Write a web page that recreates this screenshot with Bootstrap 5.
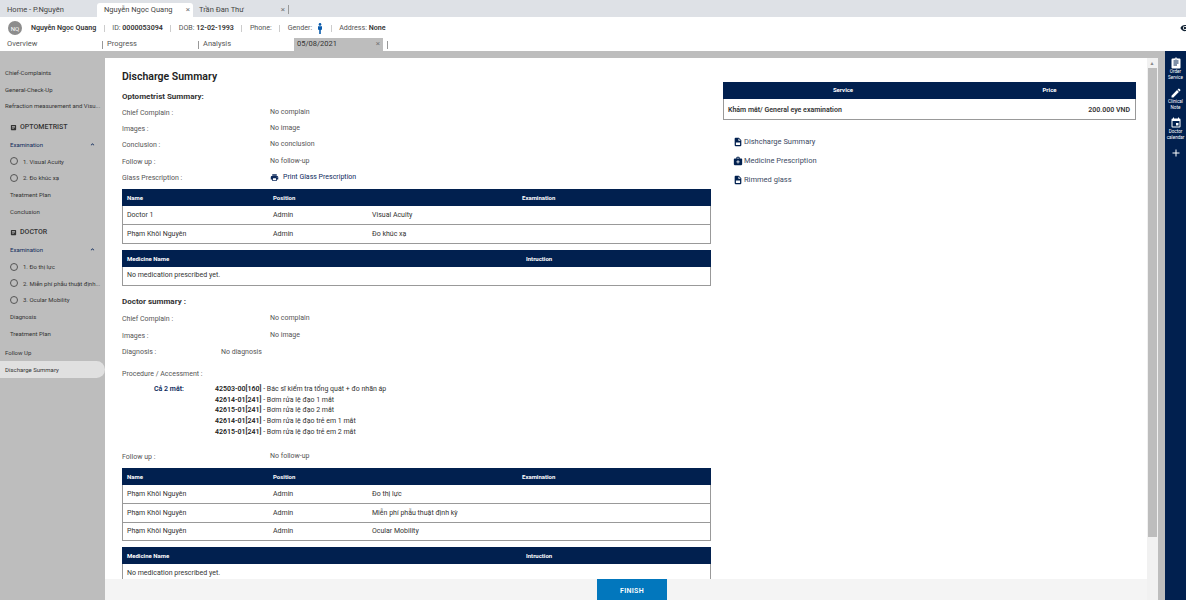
<!DOCTYPE html>
<html lang="en">
<head>
    <meta charset="UTF-8">
    <meta name="viewport" content="width=device-width, initial-scale=1.0">
    <title>Discharge Summary</title>
    <link href="https://cdn.jsdelivr.net/npm/bootstrap@5.3.3/dist/css/bootstrap.min.css" rel="stylesheet">
    <script src="https://cdn.jsdelivr.net/npm/bootstrap@5.3.3/dist/js/bootstrap.bundle.min.js"></script>
    <style>
        html, body { height: 100%; overflow: hidden; }
        body { font-family: Roboto, "Liberation Sans", sans-serif; font-size: 7px; color: #333; background: #fff; }
        svg { fill: currentColor; flex: none; display: block; }

        .tab-strip { height: 17px; background: #dee1e6; font-size: 7.5px; padding-left: 7px; color: #444; }
        .tab-strip .tab-item { width: 96px; height: 14px; margin-top: 3px; padding: 0 3px 0 0; }
        .tab-strip .tab-first { width: 90px; }
        .tab-strip .tab-on { background: #fff; border-radius: 3px 3px 0 0; padding-left: 7px; }
        .tab-x { color: #777; font-size: 8px; }
        .tab-strip .tab-third { width: 96px; border-right: 1px solid #999; padding-left: 6px; height: 9px; margin-top: 5px; }

        .patient-bar { height: 21px; padding: 1px 0 0 8px; font-size: 7.1px; color: #555; }
        .avatar { width: 14px; height: 14px; border-radius: 50%; background: #8d8d8d; color: #fff; font-size: 6px; margin-right: 9px; }
        .sep { width: 1px; height: 7px; background: #ccc; margin: 0 7.5px; }
        .patient-name { font-weight: 600; color: #333; }
        .patient-bar b { font-weight: 600; color: #333; }
        .gender-icon { color: #0b5cad; margin-left: 5px; }
        .eye-icon { margin-left: auto; margin-right: -5px; color: #123; }

        .sub-tabs { height: 13px; padding-left: 7px; font-size: 7.5px; color: #555; }
        .sub-item { width: 96px; height: 13px; }
        .sub-item span { margin-top: -2px; }
        .sub-item.bordered { border-right: 1px solid #999; height: 8px; }
        .sub-on { background: #bdbdbd; width: 90px; padding: 0 3px; margin-left: -1px; border-right: 1px solid #fff; color: #333; }
        .sub-end { width: 1px; height: 8px; background: #999; margin-left: 3px; }

        .work { height: 549px; background: #bdbdbd; }

        .side-nav { width: 105px; padding-top: 13px; font-size: 6px; color: #333; }
        .side-row { height: 16.7px; padding-left: 5px; white-space: nowrap; }
        .side-sub { padding-left: 10px; }
        .side-head { font-size: 7px; height: 22px; padding: 3px 0 0 10px; gap: 3px; color: #333; font-weight: 500; }
        .side-head-first { padding-top: 5px; }
        .side-link { color: #0d2a5c; justify-content: space-between; padding-right: 9px; }
        .side-circle { width: 8px; height: 8px; border: 1px solid #555; border-radius: 50%; margin-right: 5px; }
        .side-follow { margin-top: 3px; }
        .side-on { background: #e0e0e0; border-radius: 0 9px 9px 0; }

        .main-panel { margin-top: 7px; width: 1042px; background: #f4f4f4; min-width: 0; }
        .page-body { height: 521px; overflow: hidden; background: #fff; }
        .col-left { width: 589px; margin-left: 17px; padding-top: 12px; }
        .col-right { width: 413px; margin-left: 12px; padding-top: 24px; }

        .page-title { font-size: 10.5px; font-weight: 600; color: #222; margin: 0; height: 13px; line-height: 13px; }
        .sec-title { font-size: 8px; font-weight: 700; color: #333; margin: 8px 0 2px; height: 12px; line-height: 12px; }
        .sec-doctor { margin: 10px 0 4px; }
        .kv { height: 16.3px; color: #555; font-size: 7px; }
        .kv-key { width: 148px; }
        .kv-key-short { width: 99px; }
        .kv-val { margin-top: -2px; }
        .kv-proc { margin-top: 6px; }
        .link-navy { color: #0d2a5c; }

        .data-tbl { width: 100%; table-layout: fixed; border-collapse: separate; border-spacing: 0; margin: 0; font-size: 7px; }
        .data-tbl th { background: #01204f; color: #fff; height: 17px; padding: 0 5px; font-size: 6px; font-weight: 700; }
        .data-tbl td { height: 18.7px; padding: 0 5px; border-bottom: 1px solid #999; color: #333; vertical-align: middle; }
        .data-tbl td:first-child { border-left: 1px solid #999; padding-left: 4px; }
        .data-tbl td:last-child { border-right: 1px solid #999; }
        .tbl-gap { margin-top: 3px; }
        .tbl-next { margin-top: 6px; }
        .tbl-last { margin-top: 6px; }
        .data-tbl.tbl-service th { padding-bottom: 2px; }
        .data-tbl.tbl-service td { height: 21px; padding-top: 2px; font-weight: 600; }

        .proc-wrap { padding-left: 32px; margin-top: 1.5px; height: 64.9px; line-height: 10.6px; font-size: 7px; }
        .proc-label { width: 61px; font-weight: 600; color: #0d2a5c; }
        .proc-lines b { font-weight: 600; color: #222; }

        .doc-links { padding: 16px 0 0 10px; font-size: 7.5px; color: #3c4a63; gap: 8px; }
        .doc-links > div { height: 11px; gap: 1px; }
        .doc-links svg { color: #01204f; }

        .finish-bar { height: 21px; background: #f4f4f4; padding-left: 492px; }
        .finish-btn { width: 70px; height: 21px; background: #0277bd; color: #fff; border: 0; border-radius: 0; padding: 3px 0 0; font-size: 7px; font-weight: 600; letter-spacing: .3px; }

        .scroll-track { width: 11px; background: #f1f1f1; margin-top: 7px; padding-right: 1px; }
        .scroll-btn { height: 10px; color: #888; font-size: 5px; line-height: 10px; text-align: center; }
        .scroll-thumb { height: 469px; margin-left: 1px; background: #bdbdbd; }

        .right-rail { width: 21px; margin-left: 7px; background: #01204f; color: #fff; font-size: 4.6px; line-height: 6.3px; text-align: center; padding-top: 6px; }
        .rail-item { height: 30px; }
    </style>
</head>
<body>

<div class="tab-strip d-flex align-items-start">
    <div class="tab-item tab-first d-flex align-items-center">Home - P.Nguyên</div>
    <div class="tab-item tab-on d-flex align-items-center justify-content-between">Nguyễn Ngọc Quang <span class="tab-x">×</span></div>
    <div class="tab-item tab-third d-flex align-items-center justify-content-between">Trần Đan Thư <span class="tab-x">×</span></div>
</div>

<div class="patient-bar d-flex align-items-center">
    <div class="avatar d-flex align-items-center justify-content-center">NQ</div>
    <span class="patient-name">Nguyễn Ngọc Quang</span>
    <span class="sep"></span>
    <span>ID: <b>0000053094</b></span>
    <span class="sep"></span>
    <span>DOB: <b>12-02-1993</b></span>
    <span class="sep"></span>
    <span>Phone:</span>
    <span class="sep"></span>
    <span>Gender:</span>
    <svg class="gender-icon" width="6" height="11" viewBox="0 0 6 11"><circle cx="3" cy="1.4" r="1.3"/><path d="M1 3.2h4v3.6H4V11H3.2V7H2.8v4H2V6.8H1z"/></svg>
    <span class="sep"></span>
    <span>Address: <b>None</b></span>
    <svg class="eye-icon" width="12" height="10" viewBox="0 0 24 24"><path d="M12 4.5C7 4.500 2.700 7.600 1 12c1.700 4.400 6 7.500 11 7.500s9.300-3.100 11-7.500c-1.700-4.400-6-7.500-11-7.500zM12 17a5 5 0 1 1 0-10 5 5 0 0 1 0 10zm0-8a3 3 0 1 0 0 6 3 3 0 0 0 0-6z"/></svg>
</div>

<div class="sub-tabs d-flex align-items-center">
    <div class="sub-item bordered d-flex align-items-center"><span>Overview</span></div>
    <div class="sub-item bordered d-flex align-items-center ps-1"><span>Progress</span></div>
    <div class="sub-item d-flex align-items-center ps-1"><span>Analysis</span></div>
    <div class="sub-item sub-on d-flex align-items-center justify-content-between"><span>05/08/2021</span><span class="tab-x">×</span></div>
    <div class="sub-end"></div>
</div>

<div class="work d-flex">
    <nav class="side-nav flex-shrink-0">
        <div class="side-row d-flex align-items-center">Chief-Complaints</div>
        <div class="side-row d-flex align-items-center">General-Check-Up</div>
        <div class="side-row d-flex align-items-center">Refraction measurement and Visu...</div>
        <div class="side-head side-head-first d-flex align-items-center">
            <svg width="7" height="7" viewBox="0 0 24 24"><path d="M19 3H5a2 2 0 0 0-2 2v14a2 2 0 0 0 2 2h14a2 2 0 0 0 2-2V5a2 2 0 0 0-2-2zM7 7h10v2H7zm0 4h10v2H7zm0 4h7v2H7z"/></svg>
            OPTOMETRIST
        </div>
        <div class="side-row side-sub side-link d-flex align-items-center">Examination <svg width="7" height="7" viewBox="0 0 24 24"><path d="M12 8l-6 6 1.400 1.400L12 10.800l4.600 4.600L18 14z"/></svg></div>
        <div class="side-row side-sub d-flex align-items-center"><span class="side-circle"></span>1. Visual Acuity</div>
        <div class="side-row side-sub d-flex align-items-center"><span class="side-circle"></span>2. Đo khúc xạ</div>
        <div class="side-row side-sub d-flex align-items-center">Treatment Plan</div>
        <div class="side-row side-sub d-flex align-items-center">Conclusion</div>
        <div class="side-head d-flex align-items-center">
            <svg width="7" height="7" viewBox="0 0 24 24"><path d="M19 3H5a2 2 0 0 0-2 2v14a2 2 0 0 0 2 2h14a2 2 0 0 0 2-2V5a2 2 0 0 0-2-2zM7 7h10v2H7zm0 4h10v2H7zm0 4h7v2H7z"/></svg>
            DOCTOR
        </div>
        <div class="side-row side-sub side-link d-flex align-items-center">Examination <svg width="7" height="7" viewBox="0 0 24 24"><path d="M12 8l-6 6 1.400 1.400L12 10.800l4.600 4.600L18 14z"/></svg></div>
        <div class="side-row side-sub d-flex align-items-center"><span class="side-circle"></span>1. Đo thị lực</div>
        <div class="side-row side-sub d-flex align-items-center"><span class="side-circle"></span>2. Miễn phí phẫu thuật định...</div>
        <div class="side-row side-sub d-flex align-items-center"><span class="side-circle"></span>3. Ocular Mobility</div>
        <div class="side-row side-sub d-flex align-items-center">Diagnosis</div>
        <div class="side-row side-sub d-flex align-items-center">Treatment Plan</div>
        <div class="side-row side-follow d-flex align-items-center">Follow Up</div>
        <div class="side-row side-on d-flex align-items-center">Discharge Summary</div>
    </nav>

    <div class="main-panel flex-shrink-0">
        <div class="page-body d-flex">
            <div class="col-left flex-shrink-0">
                <h1 class="page-title">Discharge Summary</h1>
                <h2 class="sec-title">Optometrist Summary:</h2>
                <div class="kv d-flex align-items-center"><span class="kv-key">Chief Complain :</span><span class="kv-val">No complain</span></div>
                <div class="kv d-flex align-items-center"><span class="kv-key">Images :</span><span class="kv-val">No image</span></div>
                <div class="kv d-flex align-items-center"><span class="kv-key">Conclusion :</span><span class="kv-val">No conclusion</span></div>
                <div class="kv d-flex align-items-center"><span class="kv-key">Follow up :</span><span class="kv-val">No follow-up</span></div>
                <div class="kv d-flex align-items-center"><span class="kv-key">Glass Prescription :</span>
                    <span class="kv-val d-flex align-items-center gap-1 link-navy"><svg width="9" height="9" viewBox="0 0 24 24"><path d="M19 8H5c-1.660 0-3 1.340-3 3v6h4v4h12v-4h4v-6c0-1.660-1.340-3-3-3zm-3 11H8v-5h8v5zm3-7c-.55 0-1-.45-1-1s.45-1 1-1 1 .45 1 1-.45 1-1 1zm-1-9H6v4h12V3z"/></svg>Print Glass Prescription</span></div>

                <table class="data-tbl tbl-gap">
                    <colgroup><col style="width:146px"><col style="width:99px"><col style="width:150px"><col></colgroup>
                    <tr><th>Name</th><th>Position</th><th></th><th>Examination</th></tr>
                    <tr><td>Doctor 1</td><td>Admin</td><td colspan="2">Visual Acuity</td></tr>
                    <tr><td>Phạm Khôi Nguyên</td><td>Admin</td><td colspan="2">Đo khúc xạ</td></tr>
                </table>

                <table class="data-tbl tbl-next">
                    <colgroup><col style="width:399px"><col></colgroup>
                    <tr><th>Medicine Name</th><th>Intruction</th></tr>
                    <tr><td colspan="2">No medication prescribed yet.</td></tr>
                </table>

                <h2 class="sec-title sec-doctor">Doctor summary :</h2>
                <div class="kv d-flex align-items-center"><span class="kv-key">Chief Complain :</span><span class="kv-val">No complain</span></div>
                <div class="kv d-flex align-items-center"><span class="kv-key">Images :</span><span class="kv-val">No image</span></div>
                <div class="kv d-flex align-items-center"><span class="kv-key-short">Diagnosis :</span><span>No diagnosis</span></div>
                <div class="kv kv-proc d-flex align-items-center">Procedure / Accessment :</div>

                <div class="proc-wrap d-flex">
                    <div class="proc-label">Cả 2 mắt:</div>
                    <div class="proc-lines">
                        <div><b>42503-00[160]</b> - Bác sĩ kiểm tra tổng quát + đo nhãn áp</div>
                        <div><b>42614-01[241]</b> - Bơm rửa lệ đạo 1 mắt</div>
                        <div><b>42615-01[241]</b> - Bơm rửa lệ đạo 2 mắt</div>
                        <div><b>42614-01[241]</b> - Bơm rửa lệ đạo trẻ em 1 mắt</div>
                        <div><b>42615-01[241]</b> - Bơm rửa lệ đạo trẻ em 2 mắt</div>
                    </div>
                </div>

                <div class="kv d-flex align-items-center"><span class="kv-key">Follow up :</span><span class="kv-val">No follow-up</span></div>

                <table class="data-tbl tbl-gap">
                    <colgroup><col style="width:146px"><col style="width:99px"><col style="width:150px"><col></colgroup>
                    <tr><th>Name</th><th>Position</th><th></th><th>Examination</th></tr>
                    <tr><td>Phạm Khôi Nguyên</td><td>Admin</td><td colspan="2">Đo thị lực</td></tr>
                    <tr><td>Phạm Khôi Nguyên</td><td>Admin</td><td colspan="2">Miễn phí phẫu thuật định kỳ</td></tr>
                    <tr><td>Phạm Khôi Nguyên</td><td>Admin</td><td colspan="2">Ocular Mobility</td></tr>
                </table>

                <table class="data-tbl tbl-last">
                    <colgroup><col style="width:399px"><col></colgroup>
                    <tr><th>Medicine Name</th><th>Intruction</th></tr>
                    <tr><td colspan="2">No medication prescribed yet.</td></tr>
                </table>
            </div>

            <div class="col-right flex-shrink-0">
                <table class="data-tbl tbl-service">
                    <colgroup><col style="width:240px"><col></colgroup>
                    <tr><th class="text-center">Service</th><th class="text-center">Price</th></tr>
                    <tr><td>Khám mắt/ General eye examination</td><td class="text-end">200.000 VND</td></tr>
                </table>
                <div class="doc-links d-flex flex-column">
                    <div class="d-flex align-items-center"><svg width="10" height="10" viewBox="0 0 24 24"><path d="M14 2H6a2 2 0 0 0-2 2v16a2 2 0 0 0 2 2h12a2 2 0 0 0 2-2V8zm-1 7V3.500L18.500 9zM7 13h10v6H7z"/></svg>Dishcharge Summary</div>
                    <div class="d-flex align-items-center"><svg width="10" height="10" viewBox="0 0 24 24"><path d="M20 6h-4V4c0-1.100-.9-2-2-2h-4c-1.100 0-2 .9-2 2v2H4c-1.100 0-2 .9-2 2v12c0 1.100.9 2 2 2h16c1.100 0 2-.9 2-2V8c0-1.100-.9-2-2-2zM10 4h4v2h-4V4zm6 11h-3v3h-2v-3H8v-2h3v-3h2v3h3v2z"/></svg>Medicine Prescription</div>
                    <div class="d-flex align-items-center"><svg width="10" height="10" viewBox="0 0 24 24"><path d="M14 2H6a2 2 0 0 0-2 2v16a2 2 0 0 0 2 2h12a2 2 0 0 0 2-2V8zm-1 7V3.500L18.500 9zM7 13h10v6H7z"/></svg>Rimmed glass</div>
                </div>
            </div>
        </div>
        <div class="finish-bar">
            <button type="button" class="btn finish-btn">FINISH</button>
        </div>
    </div>

    <div class="scroll-track flex-shrink-0">
        <div class="scroll-btn">▲</div>
        <div class="scroll-thumb"></div>
    </div>

    <aside class="right-rail flex-shrink-0">
        <div class="rail-item d-flex flex-column align-items-center">
            <svg width="12" height="12" viewBox="0 0 24 24"><path d="M19 3h-4.200C14.400 1.800 13.300 1 12 1s-2.400.8-2.800 2H5a2 2 0 0 0-2 2v16a2 2 0 0 0 2 2h14a2 2 0 0 0 2-2V5a2 2 0 0 0-2-2zm-7 0a1 1 0 1 1 0 2 1 1 0 0 1 0-2zm2 14H7v-2h7zm3-4H7v-2h10zm0-4H7V7h10z"/></svg>
            <span>Order<br>Service</span>
        </div>
        <div class="rail-item d-flex flex-column align-items-center">
            <svg width="12" height="12" viewBox="0 0 24 24"><path d="M3 17.250V21h3.750L17.810 9.940l-3.750-3.750zM20.710 7.040a1 1 0 0 0 0-1.410l-2.340-2.340a1 1 0 0 0-1.410 0l-1.830 1.830 3.750 3.750z"/></svg>
            <span>Clinical<br>Note</span>
        </div>
        <div class="rail-item d-flex flex-column align-items-center">
            <svg width="12" height="12" viewBox="0 0 24 24"><path d="M17 12h-5v5h5zM16 1v2H8V1H6v2H5a2 2 0 0 0-2 2v14a2 2 0 0 0 2 2h14a2 2 0 0 0 2-2V5a2 2 0 0 0-2-2h-1V1zm3 18H5V8h14z"/></svg>
            <span>Doctor<br>calendar</span>
        </div>
        <svg class="mx-auto" width="12" height="12" viewBox="0 0 24 24"><path d="M19 13h-6v6h-2v-6H5v-2h6V5h2v6h6z"/></svg>
    </aside>
</div>

</body>
</html>
